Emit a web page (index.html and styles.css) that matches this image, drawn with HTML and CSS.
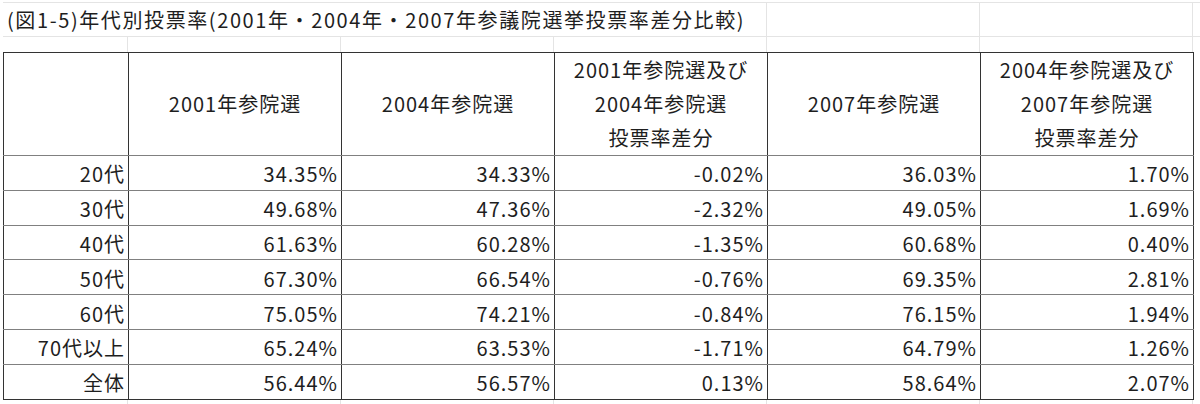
FILE: index.html
```html
<!DOCTYPE html>
<html lang="ja">
<head>
<meta charset="utf-8">
<title>年代別投票率</title>
<link rel="stylesheet" href="styles.css">
</head>
<body>
<div class="sheet">
  <div class="grid-row title-row">
    <div class="cell span4"><span class="title">(図1-5)年代別投票率(2001年・2004年・2007年参議院選挙投票率差分比較)</span></div>
    <div class="cell"></div>
    <div class="cell"></div>
  </div>
  <div class="grid-row spacer-row">
    <div class="cell"></div><div class="cell"></div><div class="cell"></div>
    <div class="cell"></div><div class="cell"></div><div class="cell"></div>
  </div>
  <table class="data">
    <colgroup>
      <col class="c-label"><col class="c-num"><col class="c-num"><col class="c-num"><col class="c-num"><col class="c-num">
    </colgroup>
    <thead>
      <tr class="head">
        <th></th>
        <th>2001年参院選</th>
        <th>2004年参院選</th>
        <th>2001年参院選及び<br>2004年参院選<br>投票率差分</th>
        <th>2007年参院選</th>
        <th>2004年参院選及び<br>2007年参院選<br>投票率差分</th>
      </tr>
    </thead>
    <tbody>
      <tr><th>20代</th><td>34.35%</td><td>34.33%</td><td>-0.02%</td><td>36.03%</td><td>1.70%</td></tr>
      <tr><th>30代</th><td>49.68%</td><td>47.36%</td><td>-2.32%</td><td>49.05%</td><td>1.69%</td></tr>
      <tr><th>40代</th><td>61.63%</td><td>60.28%</td><td>-1.35%</td><td>60.68%</td><td>0.40%</td></tr>
      <tr><th>50代</th><td>67.30%</td><td>66.54%</td><td>-0.76%</td><td>69.35%</td><td>2.81%</td></tr>
      <tr><th>60代</th><td>75.05%</td><td>74.21%</td><td>-0.84%</td><td>76.15%</td><td>1.94%</td></tr>
      <tr><th>70代以上</th><td>65.24%</td><td>63.53%</td><td>-1.71%</td><td>64.79%</td><td>1.26%</td></tr>
      <tr><th>全体</th><td>56.44%</td><td>56.57%</td><td>0.13%</td><td>58.64%</td><td>2.07%</td></tr>
    </tbody>
  </table>
  <div class="grid-row below-row">
    <div class="cell"></div><div class="cell"></div><div class="cell"></div>
    <div class="cell"></div><div class="cell"></div><div class="cell"></div>
  </div>
</div>
</body>
</html>
```

FILE: styles.css
```css
html, body {
  margin: 0;
  padding: 0;
  background: #ffffff;
}
body {
  font-family: "Noto Sans CJK JP", "Noto Sans", sans-serif;
  color: #1e1e1e;
  width: 1200px;
  height: 404px;
  overflow: hidden;
}
.sheet {
  padding: 2px 0 0 3px;
}
.grid-row {
  display: grid;
  grid-template-columns: 125px 213px 213px 213px 213px 213px;
}
.title-row {
  height: 33px;
  border-top: 1px solid #e4e4e4;
  border-bottom: 1px solid #e4e4e4;
}
.spacer-row {
  height: 15px;
}
.below-row {
  height: 10px;
}
.cell {
  border-right: 1px solid #e4e4e4;
  box-sizing: border-box;
}
.span4 {
  grid-column: span 4;
  display: flex;
  align-items: center;
  white-space: nowrap;
}
.title {
  font-size: 20px;
  letter-spacing: 1.6px;
  padding-left: 4px;
}
.data {
  border-collapse: collapse;
  table-layout: fixed;
  width: 1190px;
  font-size: 20px;
  letter-spacing: 1px;
}
.c-label { width: 125px; }
.c-num { width: 213px; }
.data th, .data td {
  border-left: 1px solid #333333;
  border-right: 1px solid #333333;
  border-top: 1.5px solid #808080;
  border-bottom: 1.5px solid #808080;
  padding: 0 3px 0 0;
  font-weight: normal;
  white-space: nowrap;
  overflow: hidden;
}
.data thead th {
  border-top: 1px solid #333333;
  height: 101px;
  text-align: center;
  line-height: 34px;
  padding: 0;
  vertical-align: middle;
}
.data tbody th, .data tbody td {
  height: 31.8px;
  text-align: right;
  vertical-align: middle;
  line-height: 31px;
  padding-top: 2px;
  padding-bottom: 0;
}
.data tbody tr:last-child th, .data tbody tr:last-child td {
  border-bottom: 1px solid #333333;
}
```
